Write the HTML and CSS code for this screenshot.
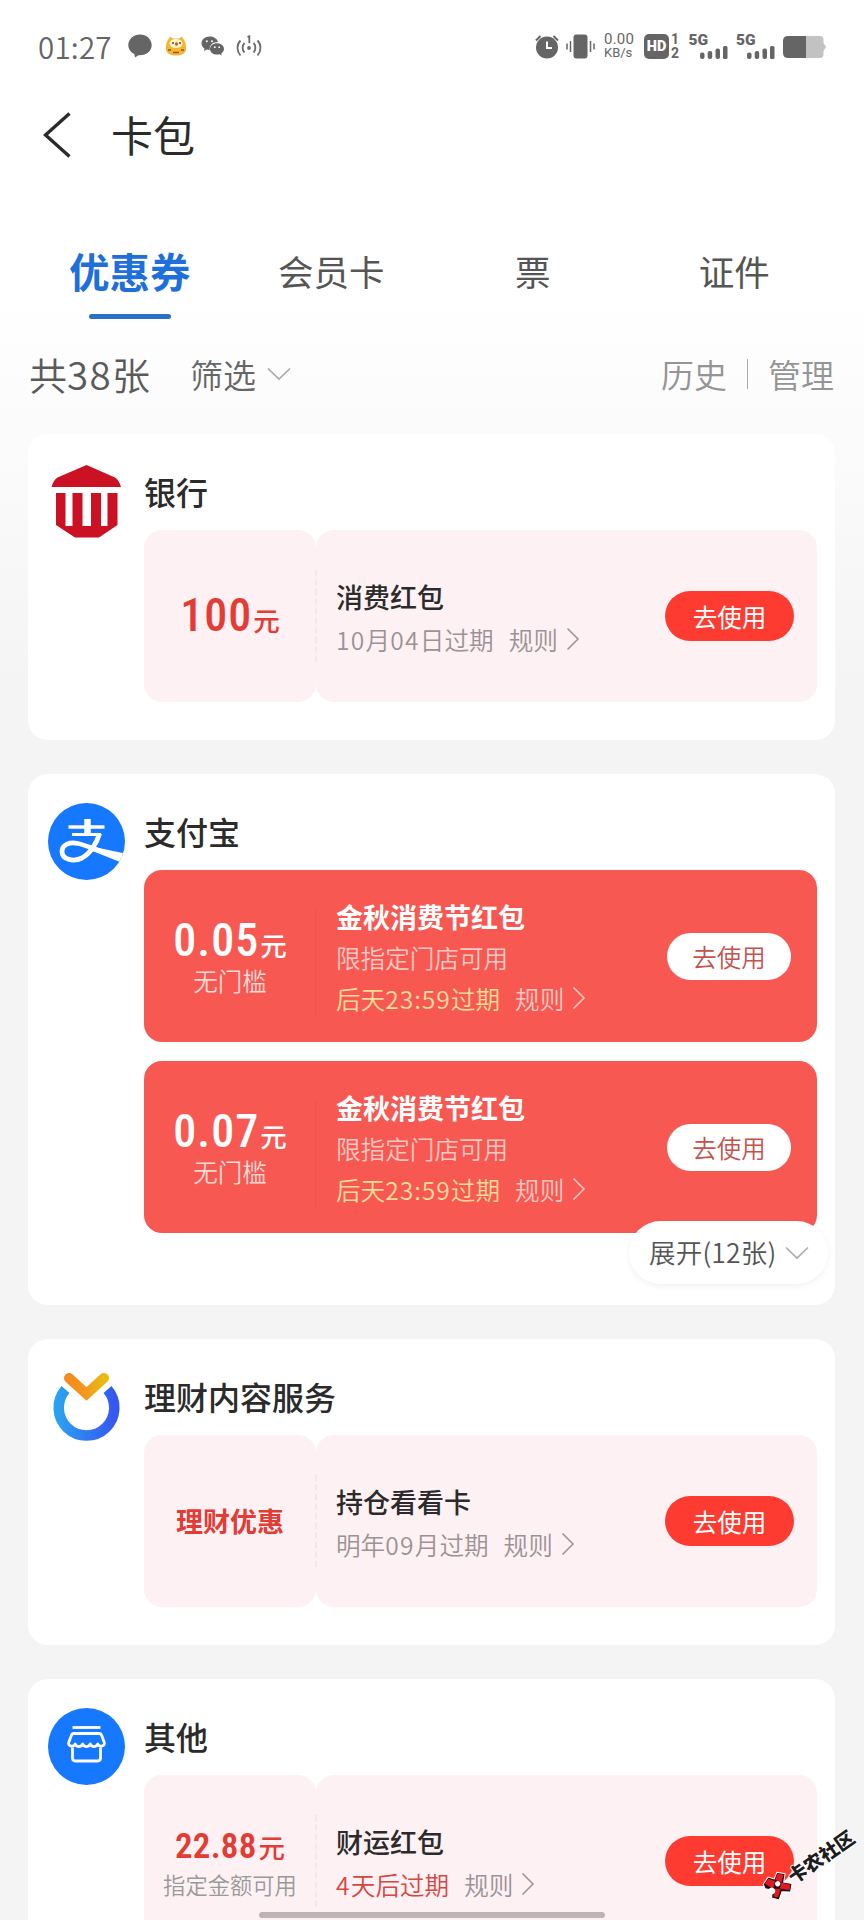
FILE: index.html
```html
<!DOCTYPE html>
<html lang="zh-CN">
<head>
<meta charset="utf-8">
<title>卡包</title>
<link rel="stylesheet" href="styles.css">
</head>
<body>
<svg width="0" height="0" class="defs">
  <defs>
    <symbol id="right" viewBox="0 0 14 24"><path d="M1.500 1.500 12 12 1.500 22.500" fill="none" stroke="currentColor" stroke-width="1.500"/></symbol>
    <symbol id="down" viewBox="0 0 24 14"><path d="M1 1.500 12 12 23 1.500" fill="none" stroke="currentColor" stroke-width="1.700"/></symbol>
  </defs>
</svg>
<div class="page">
  <div class="status">
    <div class="status-left">
      <span class="time">01:27</span>
      <svg class="i-chat" width="24" height="24" viewBox="0 0 24 24"><path fill="#656565" d="M12 .5C5.500.5.3 5.200.3 11c0 4 2.400 7.200 6 9l.7 3.500 3.500-2.200c8 .5 13.200-4.300 13.200-10.300C23.700 5.200 18.500.5 12 .5z"/></svg>
      <svg class="i-cat" width="22" height="20" viewBox="0 0 22 20"><path d="M3 4 5 .8 8 2.500h6L17 .8 19 4c2 3 2.500 7 2 10-1 4-5 5.500-10 5.500S2 18 1 14C.5 10 1 7 3 4z" fill="#f2b632"/><ellipse cx="11" cy="7.500" rx="6.500" ry="4.500" fill="#fff3cf"/><circle cx="8" cy="7" r="1" fill="#5a4218"/><circle cx="15" cy="7" r="1" fill="#5a4218"/><circle cx="11.500" cy="8" r="1.700" fill="#b06a20"/><path d="M3 14h3M16 14h3M8 16.500h6" stroke="#8a5c14" stroke-width="1.300"/></svg>
      <svg class="i-wechat" width="24" height="20" viewBox="0 0 24 20"><path fill="#656565" d="M8.500.5C4 .5.500 3.500.500 7.300c0 2.200 1.200 4 3 5.200L3 15l2.800-1.500c1 .3 2 .4 3 .4C8 9 12 5.700 17 5.900 16 2.500 12.500.5 8.500.5z"/><path fill="#656565" d="M16 7.200c-4 0-7 2.500-7 5.700s3 5.700 7 5.700c.8 0 1.700-.1 2.400-.4l2.400 1.300-.6-2.100c1.700-1.100 2.800-2.700 2.800-4.500 0-3.200-3-5.700-7-5.700z"/><g fill="#fff"><circle cx="5.800" cy="5.200" r="1"/><circle cx="11" cy="5.200" r="1"/><circle cx="13.800" cy="11.200" r=".9"/><circle cx="18.200" cy="11.200" r=".9"/></g></svg>
      <svg class="i-hot" width="26" height="22" viewBox="0 0 26 22"><g fill="none" stroke="#6a6a6a" stroke-width="1.800"><path d="M4.500 5.500C.5 9.500.5 16 4.500 20.500M8.500 8c-2.500 2.500-2.500 7 0 9.500M21.500 5.500c4 4 4 10.500 0 15M17.500 8c2.500 2.500 2.500 7 0 9.500M11.500 2l1.800-.8v7"/></g><circle cx="13" cy="13" r="1.900" fill="#6a6a6a"/></svg>
    </div>
    <div class="status-right">
      <svg width="24" height="25" viewBox="0 0 24 25"><circle cx="12" cy="13.500" r="11" fill="#656565"/><path d="M1 6.500 5.500 2M23 6.500 18.500 2" stroke="#656565" stroke-width="2"/><path d="M12 7.500V14h5" fill="none" stroke="#fff" stroke-width="2"/></svg>
      <svg class="i-vib" width="29" height="25" viewBox="0 0 29 25"><rect x="7.500" y=".5" width="14" height="24" rx="3" fill="#656565"/><path d="M1 9.500v6M4.500 7v11M24.500 7v11M28 9.500v6" stroke="#656565" stroke-width="1.500"/></svg>
      <span class="speed"><span class="num">0.00</span><span class="unit">KB/s</span></span>
      <span class="hd">HD</span>
      <span class="sim"><span>1</span><span>2</span></span>
      <span class="sig"><b>5G</b><svg width="28" height="13" viewBox="0 0 28 13"><g fill="#656565"><rect y="6.500" width="4.500" height="6.500" rx="2"/><rect x="7.700" y="5" width="4.500" height="8" rx="2"/><rect x="15.500" y="2.500" width="4.500" height="10.500" rx="2"/><rect x="23" width="4.500" height="13" rx="1.500"/></g></svg></span>
      <span class="sig"><b>5G</b><svg width="28" height="13" viewBox="0 0 28 13"><g fill="#656565"><rect y="6.500" width="4.500" height="6.500" rx="2"/><rect x="7.700" y="5" width="4.500" height="8" rx="2"/><rect x="15.500" y="2.500" width="4.500" height="10.500" rx="2"/><rect x="23" width="4.500" height="13" rx="1.500"/></g></svg></span>
      <svg class="i-bat" width="43" height="22" viewBox="0 0 43 22"><path d="M23 0h14q3.500 0 3.500 4v3l2.500 4-2.500 4v3q0 4-3.500 4H23z" fill="#c2c2c2"/><path d="M5 0h18v22H5q-5 0-5-5V5q0-5 5-5z" fill="#656565"/></svg>
    </div>
  </div>

  <header class="nav">
    <svg width="28" height="46" viewBox="0 0 28 46"><path d="M26.500 1.500 2.500 23l24 21.500" fill="none" stroke="#2b2b2b" stroke-width="3.400"/></svg>
    <h1>卡包</h1>
  </header>

  <nav class="tabs">
    <a class="tab active">优惠券</a><a class="tab">会员卡</a><a class="tab">票</a><a class="tab">证件</a>
  </nav>

  <div class="filter">
    <span class="count">共<i>38</i>张</span>
    <span class="pick">筛选</span>
    <svg class="pick-arrow" width="24" height="14"><use href="#down"/></svg>
    <span class="link">历史</span><span class="bar"></span><span class="link">管理</span>
  </div>

  <main class="list">
    <section class="card">
      <svg class="logo" width="77" height="77" viewBox="0 0 77 77"><path fill="#cb1124" d="M38.500 2 67 14.500q4 2.500 6 9.500H3.500q2-7 6-9.500zM8 30h9.500v33h7V30h10v33H43V30h10v33h6.500V30h10v32L51 74.500H27L8 62z"/></svg>
      <div class="body">
        <h2>银行</h2>
        <div class="coupon light">
          <div class="worth"><div class="amt"><b>100</b>元</div></div>
          <div class="info"><h3>消费红包</h3><p><span><i>10</i>月<i>04</i>日过期</span><span class="rule">规则<svg width="14" height="24"><use href="#right"/></svg></span></p></div>
          <button>去使用</button>
        </div>
      </div>
    </section>

    <section class="card tall">
      <svg class="logo" width="77" height="77" viewBox="0 0 77 77"><defs><clipPath id="disc"><circle cx="38.500" cy="38.500" r="38.500"/></clipPath></defs><circle cx="38.500" cy="38.500" r="38.500" fill="#1677ff"/><g clip-path="url(#disc)" fill="none" stroke="#fff"><path d="M39.500 16v14" stroke-width="6.500"/><path d="M20.500 24h36" stroke-width="3.500"/><path d="M24 31.500h29" stroke-width="3"/><path d="M51.500 30.500c-3 11-10 20.500-17.500 24.500-8 4-20 2-20-6.500 0-7 8-10 16-8 10 2.200 21 8.500 42 13.500" stroke-width="4.800"/><path d="m44 43.500 33 7-5 8.500-30-12z" fill="#fff" stroke="none"/></g></svg>
      <div class="body">
        <h2>支付宝</h2>
        <div class="coupon red">
          <div class="worth"><div class="amt"><b>0.05</b>元</div><small>无门槛</small></div>
          <div class="info"><h3>金秋消费节红包</h3><p>限指定门店可用</p><p><span class="soon">后天<i>23:59</i>过期</span><span class="rule">规则<svg width="14" height="24"><use href="#right"/></svg></span></p></div>
          <button>去使用</button>
        </div>
        <div class="coupon red">
          <div class="worth"><div class="amt"><b>0.07</b>元</div><small>无门槛</small></div>
          <div class="info"><h3>金秋消费节红包</h3><p>限指定门店可用</p><p><span class="soon">后天<i>23:59</i>过期</span><span class="rule">规则<svg width="14" height="24"><use href="#right"/></svg></span></p></div>
          <button>去使用</button>
        </div>
      </div>
      <div class="expand"><span>展开(12张)</span><svg width="24" height="14"><use href="#down"/></svg></div>
    </section>

    <section class="card">
      <svg class="logo" width="77" height="77" viewBox="0 0 77 77"><defs><linearGradient id="ring"><stop offset="0" stop-color="#2ba0f0"/><stop offset="1" stop-color="#3557f2"/></linearGradient><linearGradient id="vee"><stop offset="0" stop-color="#f58a1f"/><stop offset=".5" stop-color="#f39a1c"/><stop offset="1" stop-color="#e8bb12"/></linearGradient></defs><path d="M17.500 21.500a27.800 27.800 0 1 0 42 0" fill="none" stroke="url(#ring)" stroke-width="10.500"/><path d="M21 10 38.500 26 56 10" fill="none" stroke="url(#vee)" stroke-width="10" stroke-linecap="round"/></svg>
      <div class="body">
        <h2>理财内容服务</h2>
        <div class="coupon light">
          <div class="worth"><div class="label">理财优惠</div></div>
          <div class="info"><h3>持仓看看卡</h3><p><span>明年<i>09</i>月过期</span><span class="rule">规则<svg width="14" height="24"><use href="#right"/></svg></span></p></div>
          <button>去使用</button>
        </div>
      </div>
    </section>

    <section class="card">
      <svg class="logo" width="77" height="77" viewBox="0 0 77 77"><circle cx="38.500" cy="38.500" r="38.500" fill="#1677ff"/><g fill="none" stroke="#fff" stroke-width="2.800" stroke-linejoin="round"><path d="M24.500 19.500h28"/><path d="M26 25.500h25q2 0 2.700 2l2.600 7c1 4-5 5-6.500 1.500-2 3.500-6 3.500-7.500 0-2 3.500-6 3.500-7.600 0-2 3.500-6 3.500-7.500 0-1.500 3.500-7.500 2.500-6.500-1.500l2.600-7q.7-2 2.700-2z"/><path d="M24.500 39.500V50q0 3 3 3h22q3 0 3-3V39.500"/></g></svg>
      <div class="body">
        <h2>其他</h2>
        <div class="coupon light">
          <div class="worth"><div class="amt mid"><b>22.88</b>元</div><small>指定金额可用</small></div>
          <div class="info"><h3>财运红包</h3><p><span class="urgent"><i>4</i>天后过期</span><span class="rule">规则<svg width="14" height="24"><use href="#right"/></svg></span></p></div>
          <button>去使用</button>
        </div>
      </div>
    </section>
  </main>

  <div class="home"></div>
  <div class="mark">
    <svg width="27" height="27" viewBox="0 0 27 27"><path d="m2 4 8-3 4 5 6-4 6 6-6 6 6 6-6 6-7-5-7 5-5-6 5-6-5-5z" fill="#1c1010" stroke="#fff"/><path d="m3.500 4.500 6-2 4 6-6 5zM14.500 7l5.500-3.500 4 4.500-6.500 5.500zM13 17l5-4 6 7-4 4zM3.500 20l5-6 5 4-7 5.500z" fill="#e01822"/><circle cx="5" cy="14.500" r="3.400" fill="#fff"/><circle cx="14" cy="12" r="2.600" fill="#fff"/></svg><span>卡农社区</span>
  </div>
</div>
</body>
</html>
```
FILE: styles.css
```css
* { box-sizing: border-box; }

body {
  margin: 0;
  font-family: "Noto Sans CJK SC", "Noto Sans", sans-serif;
  color: #2b2b2b;
}

h1, h2, h3, p { margin: 0; }
i { font-style: normal; }
svg { display: block; flex: none; }
.defs { position: absolute; }

.page {
  position: relative;
  width: 864px;
  height: 1920px;
  overflow: hidden;
  background: linear-gradient(#fff 0, #fff 290px, #f4f4f4 700px);
}

/* status bar */
.status {
  height: 92px;
  padding: 0 38px 0 38px;
  display: flex;
  justify-content: space-between;
  align-items: center;
  color: #656565;
}
.status-left, .status-right { display: flex; align-items: center; }
.time { font-size: 29.500px; line-height: 40px; font-weight: 350; width: 90px; letter-spacing: .2px; }
.i-cat { margin-left: 13px; }
.i-wechat { margin-left: 14px; }
.i-hot { margin-left: 11px; }
.i-vib { margin-left: 7px; }
.speed { display: flex; flex-direction: column; width: 31px; margin-left: 9px; font-family: Roboto, sans-serif; line-height: 13px; white-space: nowrap; }
.speed .num { font-size: 15px; letter-spacing: .2px; }
.speed .unit { font-size: 13px; }
.hd {
  width: 25px; height: 25px; margin-left: 9px; border-radius: 5px;
  background: #656565; color: #fff; text-align: center;
  font: 900 14.500px/25px Roboto, sans-serif;
}
.sim { display: flex; flex-direction: column; width: 10px; margin-left: 1px; align-items: center; font: 700 14px/14px Roboto, sans-serif; }
.sig { width: 39px; height: 25px; margin-left: 8.500px; display: flex; flex-direction: column; align-items: flex-end; }
.sig b { align-self: flex-start; height: 12px; font: 900 15.500px/13px Roboto, sans-serif; }
.i-bat { margin-left: 8px; margin-top: 1px; }

/* title */
.nav { height: 88px; padding-left: 43px; display: flex; align-items: center; gap: 40px; }
.nav svg { margin-top: -2px; }
.nav h1 { font-size: 42px; line-height: 60px; font-weight: 400; margin-top: -4px; }

/* tabs */
.tabs { display: flex; height: 140px; padding: 58px 29px 0; }
.tab { flex: 1; display: flex; flex-direction: column; align-items: center; font-size: 35.500px; line-height: 66px; color: #555; }
.tab.active { font-size: 40.500px; font-weight: 700; color: #1e6fd9; }
.tab.active::after { content: ""; width: 82px; height: 5px; margin-top: 10px; border-radius: 3px; background: #2a6fc9; }

/* filter row */
.filter { height: 114px; padding: 0 30px 7px 29px; display: flex; align-items: center; line-height: 50px; color: #5a5a5a; font-size: 33px; }
.count { font-size: 38px; width: 161px; white-space: nowrap; font-weight: 350; }
.count i { font-size: 38.500px; letter-spacing: 1.400px; }
.pick { color: #666; font-weight: 350; }
.pick-arrow { margin: 1px auto 0 11px; color: #aaa; }
.link { color: #949494; font-weight: 350; }
.bar { width: 1px; height: 30px; margin: 0 20px; background: #aaa; }

/* cards */
.list { width: 807px; margin-left: 28px; display: flex; flex-direction: column; gap: 34px; }
.card { position: relative; display: flex; height: 306px; padding: 29px 18px 0 20px; background: #fff; border-radius: 20px; flex: none; }
.card.tall { height: 531px; }
.logo { margin-right: 19px; }
.body { flex: 1; display: flex; flex-direction: column; }
h2 { height: 67px; font-size: 32px; line-height: 56px; font-weight: 500; }

/* coupons */
.coupon { position: relative; display: flex; align-items: center; height: 172px; margin-bottom: 19px; border-radius: 18px; }
.worth { position: relative; width: 172px; height: 100%; padding-top: 2px; display: flex; flex-direction: column; justify-content: center; align-items: center; border-radius: 18px; }
.light .worth { background: #fdf1f4; }
.info { position: relative; flex: 1; height: 100%; padding: 3px 0 0 20px; display: flex; flex-direction: column; justify-content: center; }
.light::before { content: ""; position: absolute; left: 172px; right: 0; top: 0; bottom: 0; border-radius: 18px; background: #fdf1f4; }
.light::after { content: ""; position: absolute; left: 171px; top: 40px; bottom: 40px; border-left: 2px dashed #f6e6ea; }
.light button { position: relative; }
.red { background: #f75952; color: #fff; }
.red .info::before { content: ""; position: absolute; left: -1px; top: 40px; bottom: 25px; width: 1px; background: #ee524c; }

.amt { display: flex; align-items: baseline; gap: 1px; font-size: 26.500px; line-height: 44px; font-weight: 500; color: #e23c35; }
.amt b { font: 500 46px/44px Roboto, sans-serif; font-stretch: 84%; letter-spacing: 1px; }
.amt.mid b { font-size: 35px; font-weight: 600; font-stretch: 84%; letter-spacing: .2px; }
.amt.mid { line-height: 38px; gap: 2px; }
.red .amt { color: #fff; }
.red .worth { padding-top: 0; }
.label { font-size: 27px; line-height: 36px; margin-top: -3px; font-weight: 700; color: #e23c35; }
small { font-size: 24.500px; line-height: 27px; font-weight: 350; }
.light small { font-size: 22.300px; line-height: 30px; color: #999; }
.red small { color: #ffdad5; }

h3 { font-size: 27px; line-height: 43px; font-weight: 500; white-space: nowrap; }
.info p { display: flex; gap: 15px; font-size: 24.600px; line-height: 43px; font-weight: 350; color: #9c9295; white-space: nowrap; }
.info i { letter-spacing: 1.300px; }
.rule { display: flex; align-items: center; gap: 8px; }
.red h3 { font-weight: 700; line-height: 40.500px; }
.red .info p { line-height: 40.500px; color: #ffc9c3; }
.red .info .soon { color: #ffdc98; }
.red .info i { letter-spacing: 1px; }
.info .urgent { color: #d8453f; }

button {
  width: 129px; height: 50px; margin-right: 23px; padding: 1px 0 0; border: 0; border-radius: 25px;
  background: #fd3b30; color: #fff; font: 400 24.500px/49px "Noto Sans CJK SC", sans-serif;
}
.red button { width: 124px; height: 47px; line-height: 46px; margin-right: 26px; background: #fff; color: #c4524d; font-weight: 350; }

.expand {
  position: absolute; right: 7px; top: 447px; width: 199px; height: 63px; padding-left: 20px;
  display: flex; align-items: center; gap: 8px;
  border-radius: 32px; background: #fff; box-shadow: 0 2px 6px rgba(0, 0, 0, .06);
  font-size: 26.500px; line-height: 60px; font-weight: 350; color: #555; white-space: nowrap;
}
.expand span { letter-spacing: .2px; margin-top: -1px; }
.expand svg { color: #aaa; }

/* overlays */
.home { position: absolute; left: 259px; bottom: 2px; width: 346px; height: 6px; border-radius: 3px; background: #bfb3b7; }
.mark {
  position: absolute; left: 764px; top: 1873px; display: flex; align-items: center;
  transform: rotate(-35deg); transform-origin: 12px 12px;
  font-size: 19px; line-height: 25px; font-weight: 900; color: #1d1d1d; white-space: nowrap;
  text-shadow: 1px 0 #fff, -1px 0 #fff, 0 1px #fff, 0 -1px #fff;
}
```
